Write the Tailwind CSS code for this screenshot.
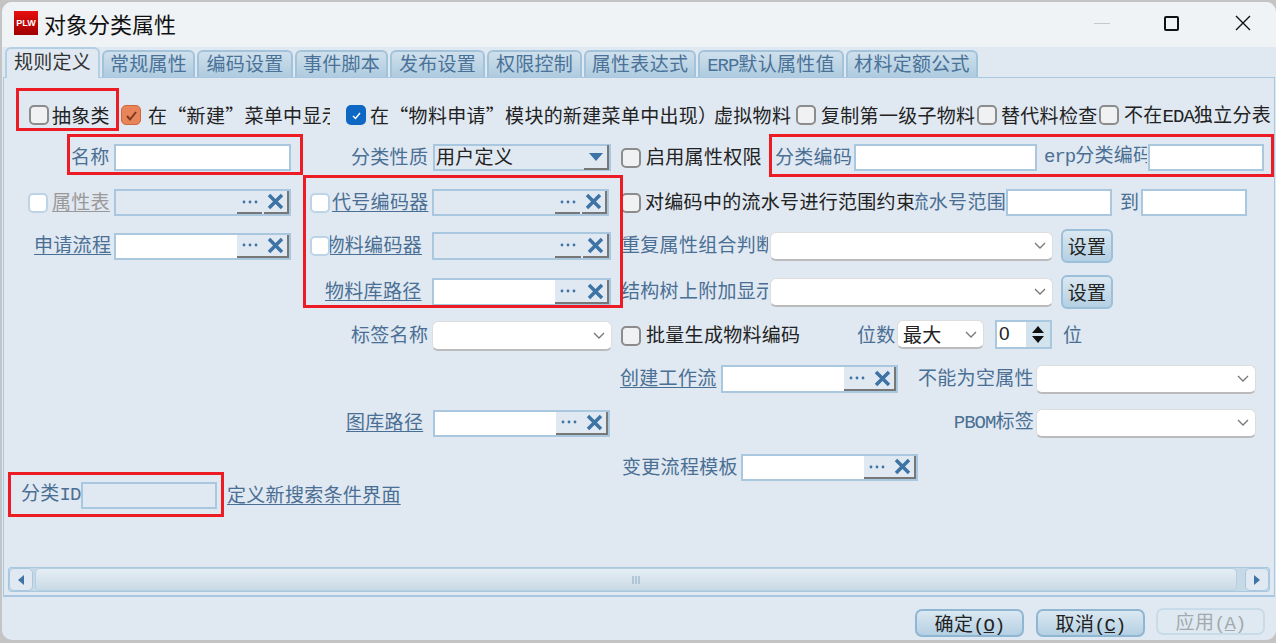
<!DOCTYPE html>
<html lang="zh"><head><meta charset="utf-8"><script src="https://cdn.jsdelivr.net/npm/@tailwindcss/browser@4"></script></head>
<body class="bg-[#c4c4c4] overflow-hidden">
<div class="relative w-[1276px] h-[643px] overflow-hidden text-[19px] leading-[24px] tracking-[0.3px] text-[#222] font-['Noto_Sans_CJK_SC',sans-serif]">
  <div class="ml-[2px] mt-[2px] h-[638px] w-[1274px] rounded-[10px] overflow-hidden bg-[#e0e8f1] flex flex-col">
    <!-- title bar -->
    <div class="h-[45px] shrink-0 bg-[#f0f3f6] flex items-center pl-[12px] pb-[3px] relative">
      <div class="w-[24px] h-[24px] bg-gradient-to-b from-[#e81010] to-[#a00000] flex items-center justify-center text-white text-[9px] font-bold tracking-normal font-['Liberation_Sans',sans-serif]">PLW</div>
      <span class="ml-[6px] -mt-[1px] text-[22px] tracking-normal text-[#111]">对象分类属性</span>
      <div class="ml-auto flex items-center pr-[25px]">
        <div class="w-[16px] h-[1px] bg-[#c8c8c8]"></div>
        <div class="ml-[54px] w-[15px] h-[15px] border-2 border-[#111] rounded-[2px]"></div>
        <svg class="ml-[56px]" width="16" height="16" viewBox="0 0 16 16"><path d="M1 1L15 15M15 1L1 15" stroke="#111" stroke-width="1.4"/></svg>
      </div>
    </div>
    <!-- tabs -->
    <div class="h-[30px] shrink-0 flex items-end pl-[3px] gap-[2px] text-[#4a7298] leading-[22px]">
      <div class="relative z-10 w-[95px] h-[31px] -mb-[1px] rounded-t-[6px] border-2 border-b-0 border-[#b3cfe3] bg-[#e0e8f1] text-[#333] text-center leading-[24px]">规则定义</div>
      <div class="w-[93px] h-[27px] rounded-t-[6px] border-2 border-b-0 border-[#a3c3da] bg-gradient-to-b from-[#cfe0ec] to-[#aecbdf] text-center">常规属性</div>
      <div class="w-[96px] h-[27px] rounded-t-[6px] border-2 border-b-0 border-[#a3c3da] bg-gradient-to-b from-[#cfe0ec] to-[#aecbdf] text-center">编码设置</div>
      <div class="w-[93px] h-[27px] rounded-t-[6px] border-2 border-b-0 border-[#a3c3da] bg-gradient-to-b from-[#cfe0ec] to-[#aecbdf] text-center">事件脚本</div>
      <div class="w-[95px] h-[27px] rounded-t-[6px] border-2 border-b-0 border-[#a3c3da] bg-gradient-to-b from-[#cfe0ec] to-[#aecbdf] text-center">发布设置</div>
      <div class="w-[95px] h-[27px] rounded-t-[6px] border-2 border-b-0 border-[#a3c3da] bg-gradient-to-b from-[#cfe0ec] to-[#aecbdf] text-center">权限控制</div>
      <div class="w-[112px] h-[27px] rounded-t-[6px] border-2 border-b-0 border-[#a3c3da] bg-gradient-to-b from-[#cfe0ec] to-[#aecbdf] text-center">属性表达式</div>
      <div class="w-[146px] h-[27px] rounded-t-[6px] border-2 border-b-0 border-[#a3c3da] bg-gradient-to-b from-[#cfe0ec] to-[#aecbdf] text-center"><span class="text-[19px] tracking-[-1px] font-['Liberation_Mono',monospace]">ERP</span>默认属性值</div>
      <div class="w-[132px] h-[27px] rounded-t-[6px] border-2 border-b-0 border-[#a3c3da] bg-gradient-to-b from-[#cfe0ec] to-[#aecbdf] text-center">材料定额公式</div>
    </div>
    <!-- panel -->
    <div class="ml-[1px] mr-[1px] h-[520px] shrink-0 border border-[#a9c8df] border-b-2 flex flex-col">
      <div class="-ml-[4px] w-[1276px] text-[#4a6f94] [&>div:not(:first-child)>span]:-translate-y-[2px]">
        <!-- row 1 -->
        <div class="mt-[27px] h-[20px] flex items-center text-[#222] whitespace-nowrap">
          <div class="ml-[29px] shrink-0 w-[20px] h-[20px] rounded-[5px] border-2 border-[#8c8c8c] bg-[#f0f1f2]"></div>
          <span class="ml-[3px] shrink-0 w-[58px]">抽象类</span>
          <div class="ml-[11px] shrink-0 w-[20px] h-[20px] rounded-[5px] bg-[#e9835a] border border-[#d0683e] flex items-center justify-center"><svg width="13" height="13" viewBox="0 0 13 13"><path d="M2 7L5 10.5L11 3" fill="none" stroke="#7a3a20" stroke-width="2"/></svg></div>
          <span class="ml-[7px] shrink-0 w-[182px] overflow-hidden font-['Noto_Sans_CJK_TC',sans-serif]">在“新建”菜单中显示</span>
          <div class="ml-[16px] shrink-0 w-[20px] h-[20px] rounded-[5px] bg-[#0f67c4] flex items-center justify-center"><svg width="13" height="13" viewBox="0 0 13 13"><path d="M3 7L5.5 9.5L10 4" fill="none" stroke="#fff" stroke-width="1.4"/></svg></div>
          <span class="ml-[4px] shrink-0 w-[339px] overflow-hidden font-['Noto_Sans_CJK_TC',sans-serif]">在“物料申请”模块的新建菜单中出现）</span>
          <span class="ml-[5px] shrink-0 w-[77px]">虚拟物料</span>
          <div class="ml-[5px] shrink-0 w-[20px] h-[20px] rounded-[5px] border-2 border-[#8c8c8c] bg-[#f0f1f2]"></div>
          <span class="ml-[5px] shrink-0 w-[154px]">复制第一级子物料</span>
          <div class="ml-[2px] shrink-0 w-[20px] h-[20px] rounded-[5px] border-2 border-[#8c8c8c] bg-[#f0f1f2]"></div>
          <span class="ml-[4px] shrink-0 w-[97px]">替代料检查</span>
          <div class="ml-[1px] shrink-0 w-[20px] h-[20px] rounded-[5px] border-2 border-[#8c8c8c] bg-[#f0f1f2]"></div>
          <span class="ml-[5px] shrink-0">不在<span class="text-[19px] tracking-[-1px] font-['Liberation_Mono',monospace]">EDA</span>独立分表</span>
        </div>
        <!-- row 2 -->
        <div class="mt-[19px] h-[27px] flex items-center whitespace-nowrap">
          <span class="ml-[71px] shrink-0 w-[38px]">名称</span>
          <div class="ml-[5px] shrink-0 w-[177px] h-[27px] bg-white border-2 border-[#a9c8df]"></div>
          <span class="ml-[60px] shrink-0 w-[77px]">分类性质</span>
          <div class="ml-[5px] shrink-0 w-[178px] h-[27px] border-2 border-[#a9c8df] flex items-center justify-between text-[#222] pl-[1px]">
            <span class="-translate-y-[2px]">用户定义</span>
            <div class="w-[25px] h-[25px] border-b-2 border-r-2 border-[#777] flex items-center justify-center"><svg width="14" height="8" viewBox="0 0 14 8"><path d="M0 0H14L7 8Z" fill="#3d73a5"/></svg></div>
          </div>
          <div class="ml-[10px] shrink-0 w-[20px] h-[20px] rounded-[5px] border-2 border-[#8c8c8c] bg-[#f0f1f2]"></div>
          <span class="ml-[5px] shrink-0 w-[116px] text-[#222]">启用属性权限</span>
          <span class="ml-[13px] shrink-0 w-[76px]">分类编码</span>
          <div class="ml-[3px] shrink-0 w-[183px] h-[27px] bg-white border-2 border-[#a9c8df]"></div>
          <span class="ml-[7px] shrink-0 w-[103px] overflow-hidden"><span class="text-[19px] tracking-[-1px] font-['Liberation_Mono',monospace]">erp</span>分类编码</span>
          <div class="ml-[1px] shrink-0 w-[116px] h-[27px] bg-white border-2 border-[#a9c8df]"></div>
        </div>
        <!-- row 3 -->
        <div class="mt-[18px] h-[27px] flex items-center whitespace-nowrap">
          <div class="ml-[28px] shrink-0 w-[20px] h-[20px] rounded-[5px] border-2 border-[#bcd4e6] bg-white"></div>
          <span class="ml-[4px] shrink-0 w-[58px] text-[#999] underline underline-offset-2">属性表</span>
          <div class="ml-[4px] shrink-0 w-[177px] h-[27px] flex border-2 border-[#a9c8df]">
            <div class="flex-1"></div>
            <div class="w-[25px] border-b-2 border-[#777] flex items-center justify-center"><svg width="16" height="4" viewBox="0 0 16 4"><circle cx="2" cy="2" r="1.4" fill="#3d73a5"/><circle cx="8" cy="2" r="1.4" fill="#3d73a5"/><circle cx="14" cy="2" r="1.4" fill="#3d73a5"/></svg></div>
            <div class="ml-[2px] w-[25px] border-b-2 border-r-2 border-[#777] flex items-center justify-center"><svg width="17" height="17" viewBox="0 0 17 17"><path d="M2 2L15 15M15 2L2 15" stroke="#3d73a5" stroke-width="3.5"/></svg></div>
          </div>
          <div class="ml-[19px] shrink-0 w-[20px] h-[20px] rounded-[5px] border-2 border-[#bcd4e6] bg-white"></div>
          <span class="ml-[2px] shrink-0 w-[97px] underline underline-offset-2">代号编码器</span>
          <div class="ml-[3px] shrink-0 w-[177px] h-[27px] flex border-2 border-[#a9c8df]">
            <div class="flex-1"></div>
            <div class="w-[25px] border-b-2 border-[#777] flex items-center justify-center"><svg width="16" height="4" viewBox="0 0 16 4"><circle cx="2" cy="2" r="1.4" fill="#3d73a5"/><circle cx="8" cy="2" r="1.4" fill="#3d73a5"/><circle cx="14" cy="2" r="1.4" fill="#3d73a5"/></svg></div>
            <div class="ml-[2px] w-[25px] border-b-2 border-r-2 border-[#777] flex items-center justify-center"><svg width="17" height="17" viewBox="0 0 17 17"><path d="M2 2L15 15M15 2L2 15" stroke="#3d73a5" stroke-width="3.5"/></svg></div>
          </div>
          <div class="ml-[12px] shrink-0 w-[20px] h-[20px] rounded-[5px] border-2 border-[#8c8c8c] bg-[#f0f1f2]"></div>
          <span class="ml-[4px] shrink-0 w-[270px] text-[#222]">对编码中的流水号进行范围约束</span>
          <span class="shrink-0 w-[91px] flex justify-end overflow-hidden">流水号范围</span>
          <div class="ml-[0px] shrink-0 w-[106px] h-[27px] bg-white border-2 border-[#a9c8df]"></div>
          <span class="ml-[8px] shrink-0 w-[19px]">到</span>
          <div class="ml-[2px] shrink-0 w-[106px] h-[27px] bg-white border-2 border-[#a9c8df]"></div>
        </div>
        <!-- row 4 -->
        <div class="mt-[13px] h-[34px] flex items-center whitespace-nowrap">
          <span class="ml-[34px] shrink-0 w-[77px] underline underline-offset-2">申请流程</span>
          <div class="ml-[3px] shrink-0 w-[177px] h-[27px] flex border-2 border-[#a9c8df] bg-white">
            <div class="flex-1"></div>
            <div class="w-[25px] bg-[#e0e8f1] border-b-2 border-[#777] flex items-center justify-center"><svg width="16" height="4" viewBox="0 0 16 4"><circle cx="2" cy="2" r="1.4" fill="#3d73a5"/><circle cx="8" cy="2" r="1.4" fill="#3d73a5"/><circle cx="14" cy="2" r="1.4" fill="#3d73a5"/></svg></div>
            <div class="pl-[2px] w-[27px] bg-[#e0e8f1] border-b-2 border-r-2 border-[#777] flex items-center justify-center"><svg width="17" height="17" viewBox="0 0 17 17"><path d="M2 2L15 15M15 2L2 15" stroke="#3d73a5" stroke-width="3.5"/></svg></div>
          </div>
          <div class="ml-[19px] shrink-0 w-[20px] h-[20px] rounded-[5px] border-2 border-[#bcd4e6] bg-white"></div>
          <span class="shrink-0 w-[92px] flex justify-end overflow-hidden underline underline-offset-2"><span class="shrink-0">物料编码器</span></span>
          <div class="ml-[10px] shrink-0 w-[179px] h-[28px] flex border-2 border-[#a9c8df]">
            <div class="flex-1"></div>
            <div class="w-[26px] border-b-2 border-[#777] flex items-center justify-center"><svg width="16" height="4" viewBox="0 0 16 4"><circle cx="2" cy="2" r="1.4" fill="#3d73a5"/><circle cx="8" cy="2" r="1.4" fill="#3d73a5"/><circle cx="14" cy="2" r="1.4" fill="#3d73a5"/></svg></div>
            <div class="ml-[2px] w-[26px] border-b-2 border-r-2 border-[#777] flex items-center justify-center"><svg width="17" height="17" viewBox="0 0 17 17"><path d="M2 2L15 15M15 2L2 15" stroke="#3d73a5" stroke-width="3.5"/></svg></div>
          </div>
          <span class="ml-[10px] shrink-0 w-[147px] overflow-hidden">重复属性组合判断</span>
          <div class="ml-[2px] shrink-0 w-[283px] h-[29px] bg-white rounded-[6px] border border-[#ddd] border-b-2 border-b-[#bbb] flex items-center justify-end pr-[6px]"><svg width="12" height="7" viewBox="0 0 12 7"><path d="M1 1L6 6L11 1" fill="none" stroke="#777" stroke-width="1.3"/></svg></div>
          <div class="ml-[8px] shrink-0 w-[52px] h-[34px] rounded-[6px] border-2 border-[#9cc0da] bg-gradient-to-b from-[#dbe8f1] to-[#b4d0e3] text-[#222] text-center leading-[30px]">设置</div>
        </div>
        <!-- row 5 -->
        <div class="mt-[12px] h-[34px] flex items-center whitespace-nowrap">
          <span class="ml-[325px] shrink-0 w-[97px] underline underline-offset-2">物料库路径</span>
          <div class="ml-[10px] shrink-0 w-[179px] h-[28px] flex border-2 border-[#a9c8df] bg-white">
            <div class="flex-1"></div>
            <div class="w-[26px] bg-[#e0e8f1] border-b-2 border-[#777] flex items-center justify-center"><svg width="16" height="4" viewBox="0 0 16 4"><circle cx="2" cy="2" r="1.4" fill="#3d73a5"/><circle cx="8" cy="2" r="1.4" fill="#3d73a5"/><circle cx="14" cy="2" r="1.4" fill="#3d73a5"/></svg></div>
            <div class="pl-[2px] w-[28px] bg-[#e0e8f1] border-b-2 border-r-2 border-[#777] flex items-center justify-center"><svg width="17" height="17" viewBox="0 0 17 17"><path d="M2 2L15 15M15 2L2 15" stroke="#3d73a5" stroke-width="3.5"/></svg></div>
          </div>
          <span class="ml-[10px] shrink-0 w-[147px] overflow-hidden">结构树上附加显示</span>
          <div class="ml-[2px] shrink-0 w-[283px] h-[29px] bg-white rounded-[6px] border border-[#ddd] border-b-2 border-b-[#bbb] flex items-center justify-end pr-[6px]"><svg width="12" height="7" viewBox="0 0 12 7"><path d="M1 1L6 6L11 1" fill="none" stroke="#777" stroke-width="1.3"/></svg></div>
          <div class="ml-[8px] shrink-0 w-[52px] h-[34px] rounded-[6px] border-2 border-[#9cc0da] bg-gradient-to-b from-[#dbe8f1] to-[#b4d0e3] text-[#222] text-center leading-[30px]">设置</div>
        </div>
        <!-- row 6 -->
        <div class="mt-[11px] h-[31px] flex items-center whitespace-nowrap">
          <span class="ml-[351px] shrink-0 w-[77px]">标签名称</span>
          <div class="ml-[4px] shrink-0 w-[180px] h-[30px] bg-white rounded-[6px] border border-[#ddd] border-b-2 border-b-[#bbb] flex items-center justify-end pr-[6px]"><svg width="12" height="7" viewBox="0 0 12 7"><path d="M1 1L6 6L11 1" fill="none" stroke="#777" stroke-width="1.3"/></svg></div>
          <div class="ml-[9px] shrink-0 w-[20px] h-[20px] rounded-[5px] border-2 border-[#8c8c8c] bg-[#f0f1f2]"></div>
          <span class="ml-[5px] shrink-0 w-[155px] text-[#222]">批量生成物料编码</span>
          <span class="ml-[56px] shrink-0 w-[38px]">位数</span>
          <div class="ml-[2px] -mt-[2px] shrink-0 w-[87px] h-[29px] bg-white rounded-[6px] border border-[#ddd] border-b-2 border-b-[#bbb] flex items-center justify-between pl-[5px] pr-[6px] text-[#222]"><span>最大</span><svg width="12" height="7" viewBox="0 0 12 7"><path d="M1 1L6 6L11 1" fill="none" stroke="#777" stroke-width="1.3"/></svg></div>
          <div class="ml-[11px] -mt-[3px] shrink-0 w-[57px] h-[29px] border-2 border-[#a9c8df] bg-white flex text-[#222]">
            <span class="flex-1 pl-[2px] leading-[24px] font-['Liberation_Sans',sans-serif]">0</span>
            <div class="w-[24px] flex flex-col items-center justify-center gap-[3px] bg-[#d3e3ee]"><svg width="12" height="7" viewBox="0 0 12 7"><path d="M0 7H12L6 0Z" fill="#111"/></svg><svg width="12" height="7" viewBox="0 0 12 7"><path d="M0 0H12L6 7Z" fill="#111"/></svg></div>
          </div>
          <span class="ml-[11px] shrink-0 w-[19px]">位</span>
        </div>
        <!-- row 7 -->
        <div class="mt-[14px] h-[28px] flex items-center whitespace-nowrap">
          <span class="ml-[620px] shrink-0 w-[97px] underline underline-offset-2">创建工作流</span>
          <div class="ml-[4px] shrink-0 w-[177px] h-[28px] flex border-2 border-[#a9c8df] bg-white">
            <div class="flex-1"></div>
            <div class="w-[25px] bg-[#e0e8f1] border-b-2 border-[#777] flex items-center justify-center"><svg width="16" height="4" viewBox="0 0 16 4"><circle cx="2" cy="2" r="1.4" fill="#3d73a5"/><circle cx="8" cy="2" r="1.4" fill="#3d73a5"/><circle cx="14" cy="2" r="1.4" fill="#3d73a5"/></svg></div>
            <div class="pl-[2px] w-[27px] bg-[#e0e8f1] border-b-2 border-r-2 border-[#777] flex items-center justify-center"><svg width="17" height="17" viewBox="0 0 17 17"><path d="M2 2L15 15M15 2L2 15" stroke="#3d73a5" stroke-width="3.5"/></svg></div>
          </div>
          <span class="ml-[20px] shrink-0 w-[116px]">不能为空属性</span>
          <div class="ml-[2px] shrink-0 w-[220px] h-[29px] bg-white rounded-[6px] border border-[#ddd] border-b-2 border-b-[#bbb] flex items-center justify-end pr-[6px]"><svg width="12" height="7" viewBox="0 0 12 7"><path d="M1 1L6 6L11 1" fill="none" stroke="#777" stroke-width="1.3"/></svg></div>
        </div>
        <!-- row 8 -->
        <div class="mt-[16px] h-[28px] flex items-center whitespace-nowrap">
          <span class="ml-[346px] shrink-0 w-[77px] underline underline-offset-2">图库路径</span>
          <div class="ml-[10px] shrink-0 w-[177px] h-[27px] flex border-2 border-[#a9c8df] bg-white">
            <div class="flex-1"></div>
            <div class="w-[25px] bg-[#e0e8f1] border-b-2 border-[#777] flex items-center justify-center"><svg width="16" height="4" viewBox="0 0 16 4"><circle cx="2" cy="2" r="1.4" fill="#3d73a5"/><circle cx="8" cy="2" r="1.4" fill="#3d73a5"/><circle cx="14" cy="2" r="1.4" fill="#3d73a5"/></svg></div>
            <div class="pl-[2px] w-[27px] bg-[#e0e8f1] border-b-2 border-r-2 border-[#777] flex items-center justify-center"><svg width="17" height="17" viewBox="0 0 17 17"><path d="M2 2L15 15M15 2L2 15" stroke="#3d73a5" stroke-width="3.5"/></svg></div>
          </div>
          <span class="ml-[343px] shrink-0 w-[81px] text-right"><span class="text-[19px] tracking-[-1px] font-['Liberation_Mono',monospace]">PBOM</span>标签</span>
          <div class="ml-[2px] shrink-0 w-[220px] h-[29px] bg-white rounded-[6px] border border-[#ddd] border-b-2 border-b-[#bbb] flex items-center justify-end pr-[6px]"><svg width="12" height="7" viewBox="0 0 12 7"><path d="M1 1L6 6L11 1" fill="none" stroke="#777" stroke-width="1.3"/></svg></div>
        </div>
        <!-- row 9 -->
        <div class="mt-[17px] h-[27px] flex items-center whitespace-nowrap">
          <span class="ml-[622px] shrink-0 w-[116px]">变更流程模板</span>
          <div class="ml-[3px] shrink-0 w-[177px] h-[27px] flex border-2 border-[#a9c8df] bg-white">
            <div class="flex-1"></div>
            <div class="w-[25px] bg-[#e0e8f1] border-b-2 border-[#777] flex items-center justify-center"><svg width="16" height="4" viewBox="0 0 16 4"><circle cx="2" cy="2" r="1.4" fill="#3d73a5"/><circle cx="8" cy="2" r="1.4" fill="#3d73a5"/><circle cx="14" cy="2" r="1.4" fill="#3d73a5"/></svg></div>
            <div class="pl-[2px] w-[27px] bg-[#e0e8f1] border-b-2 border-r-2 border-[#777] flex items-center justify-center"><svg width="17" height="17" viewBox="0 0 17 17"><path d="M2 2L15 15M15 2L2 15" stroke="#3d73a5" stroke-width="3.5"/></svg></div>
          </div>
        </div>
        <!-- row 10 -->
        <div class="mt-[1px] h-[27px] flex items-center whitespace-nowrap">
          <span class="ml-[21px] shrink-0 w-[58px]">分类<span class="text-[19px] tracking-[-1px] font-['Liberation_Mono',monospace]">ID</span></span>
          <div class="ml-[2px] shrink-0 w-[136px] h-[27px] border-2 border-[#a9c8df]"></div>
          <span class="ml-[10px] shrink-0 w-[176px] underline underline-offset-2">定义新搜索条件界面</span>
        </div>
      </div>
      <!-- scrollbar -->
      <div class="mt-auto mb-[3px] ml-[4px] mr-[4px] h-[25px] shrink-0 flex border border-[#a9c8df] rounded-[3px] bg-[#c6d9e6]">
        <div class="w-[24px] rounded-[5px] border border-[#a9c8df] bg-[#e0e8f1] flex items-center justify-center"><svg width="6" height="10" viewBox="0 0 6 10"><path d="M6 0V10L0 5Z" fill="#3d73a5"/></svg></div>
        <div class="ml-[2px] w-[1202px] rounded-[5px] border border-[#b5cfe1] bg-gradient-to-b from-[#e6eef4] to-[#c9dae6] flex items-center justify-center">
          <svg width="8" height="8" viewBox="0 0 8 8"><path d="M1 0V8M4 0V8M7 0V8" stroke="#8aa9c0" stroke-width="1"/></svg>
        </div>
        <div class="ml-auto w-[24px] rounded-[5px] border border-[#a9c8df] bg-[#e0e8f1] flex items-center justify-center"><svg width="6" height="10" viewBox="0 0 6 10"><path d="M0 0V10L6 5Z" fill="#3d73a5"/></svg></div>
      </div>
    </div>
    <!-- footer -->
    <div class="flex-1 flex justify-end items-start pt-[12px] pr-[11px] whitespace-nowrap">
      <div class="w-[109px] h-[28px] rounded-[7px] border-2 border-[#8fb6d3] bg-gradient-to-b from-[#dbe8f1] to-[#b4d0e3] text-[#222] text-center leading-[23px]">确定<span class="text-[19px] tracking-[-1px] font-['Liberation_Mono',monospace]">(<span class="underline">O</span>)</span></div>
      <div class="ml-[12px] w-[109px] h-[28px] rounded-[7px] border-2 border-[#8fb6d3] bg-gradient-to-b from-[#dbe8f1] to-[#b4d0e3] text-[#222] text-center leading-[23px]">取消<span class="text-[19px] tracking-[-1px] font-['Liberation_Mono',monospace]">(<span class="underline">C</span>)</span></div>
      <div class="ml-[11px] -mt-[1px] w-[109px] h-[27px] rounded-[7px] border-2 border-[#c8dbe8] bg-[#dfe9f1] text-[#a3a9ae] text-center leading-[22px]">应用<span class="text-[19px] tracking-[-1px] font-['Liberation_Mono',monospace]">(<span class="underline">A</span>)</span></div>
    </div>
  </div>
  <!-- red annotation boxes -->
  <div class="absolute left-[16px] top-[88px] w-[103px] h-[43px] border-[3px] border-[#ed1c24] pointer-events-none"></div>
  <div class="absolute left-[67px] top-[134px] w-[236px] h-[41px] border-[3px] border-[#ed1c24] pointer-events-none"></div>
  <div class="absolute left-[303px] top-[175px] w-[320px] h-[133px] border-[3px] border-[#ed1c24] pointer-events-none"></div>
  <div class="absolute left-[769px] top-[134px] w-[505px] h-[43px] border-[3px] border-[#ed1c24] pointer-events-none"></div>
  <div class="absolute left-[8px] top-[472px] w-[216px] h-[45px] border-[3px] border-[#ed1c24] pointer-events-none"></div>
</div>
</body></html>
